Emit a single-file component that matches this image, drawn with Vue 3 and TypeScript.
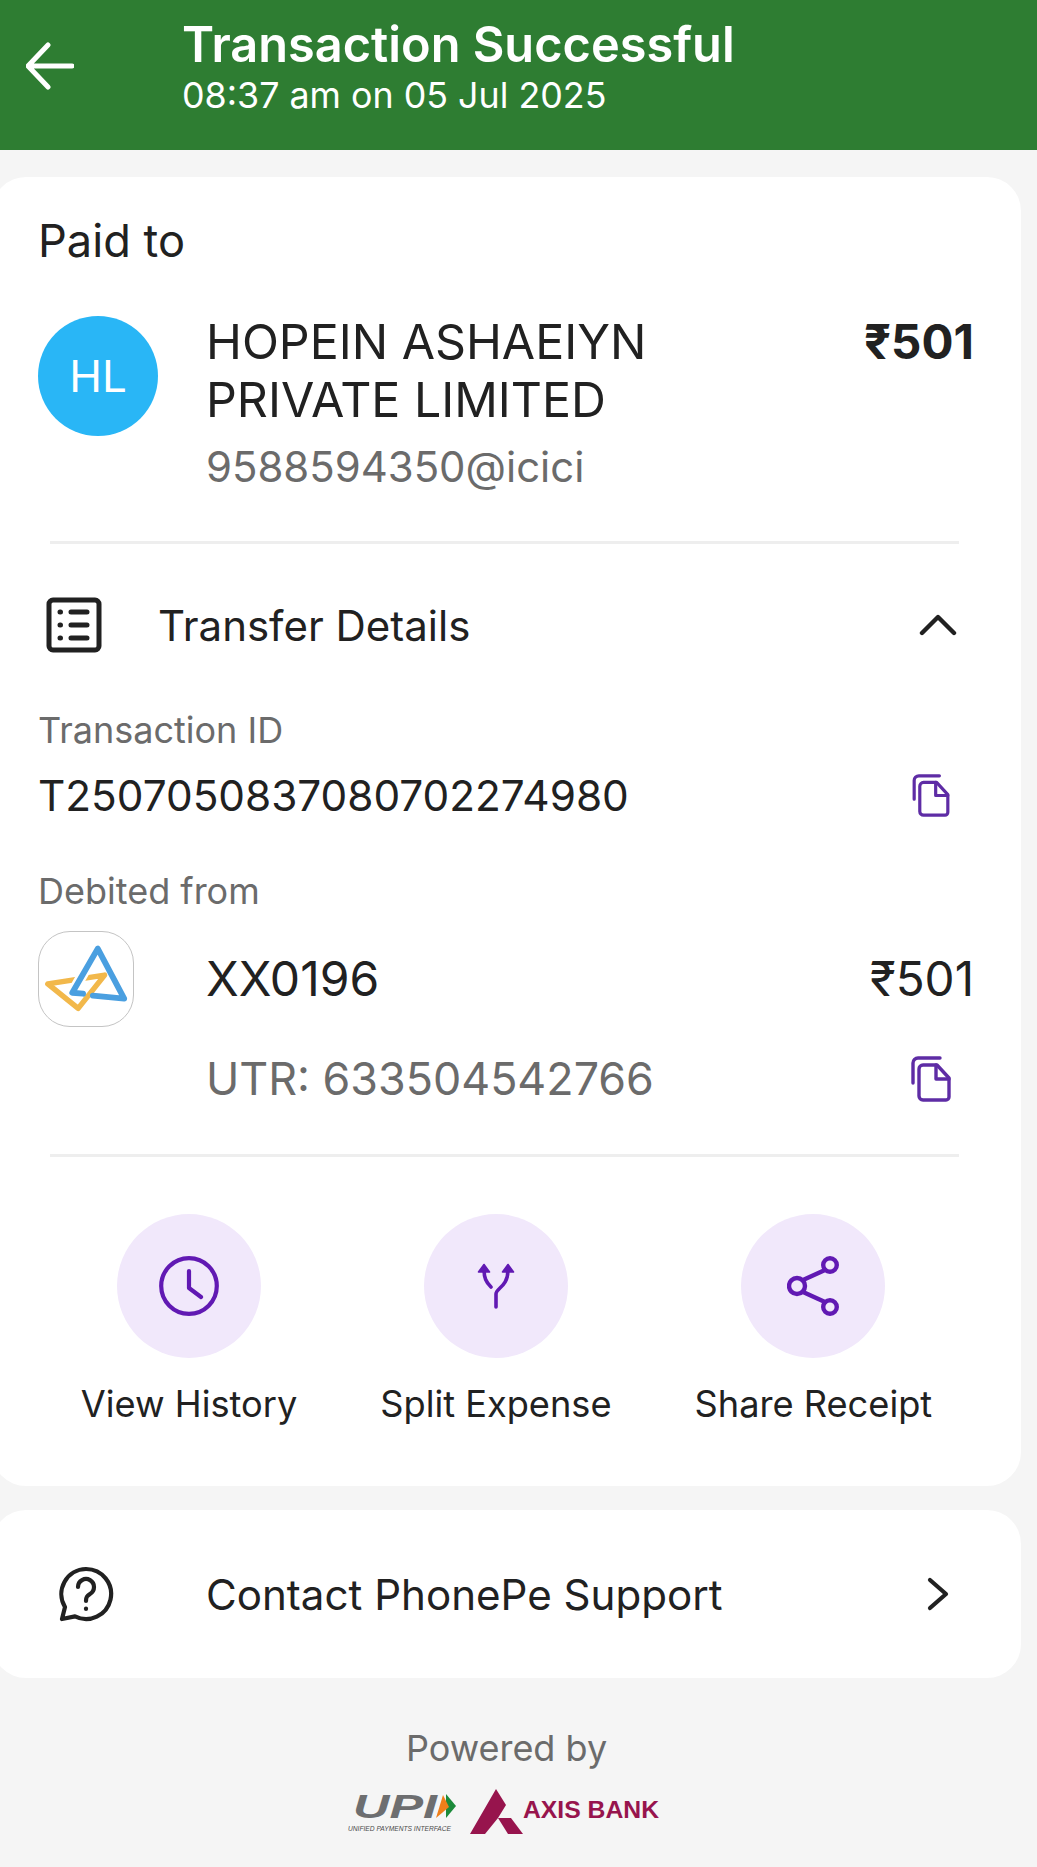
<script setup lang="ts">
const actions = [
  { key: "history", label: "View History" },
  { key: "split", label: "Split Expense" },
  { key: "share", label: "Share Receipt" },
];
</script>

<template>
  <div class="screen">
    <header class="topbar">
      <svg class="back" viewBox="0 0 48 48" fill="none" stroke="#fff" stroke-width="5" stroke-linecap="round" stroke-linejoin="round">
        <path d="M46 24H3M22 3 2 24l20 21" />
      </svg>
      <div class="topbar-text">
        <div class="title">Transaction Successful</div>
        <div class="subtitle">08:37 am on 05 Jul 2025</div>
      </div>
    </header>

    <main class="content">
      <section class="card details">
        <div class="paid-label">Paid to</div>
        <div class="payee">
          <div class="avatar">HL</div>
          <div class="payee-info">
            <div class="payee-name">HOPEIN ASHAEIYN<br />PRIVATE LIMITED</div>
            <div class="payee-upi">9588594350@icici</div>
          </div>
          <div class="payee-amount">₹501</div>
        </div>

        <hr class="divider" />

        <div class="transfer-head">
          <svg class="list-icon" viewBox="0 0 56 56" fill="none" stroke="#212121" stroke-width="5" stroke-linecap="round">
            <rect x="3" y="3" width="50" height="50" rx="4" stroke-linejoin="round" />
            <path d="M25 15h16M25 28h16M25 41h16" />
            <path d="M14 15h.5M14 28h.5M14 41h.5" />
          </svg>
          <span class="transfer-title">Transfer Details</span>
          <svg class="chevron-up" viewBox="0 0 38 22" fill="none" stroke="#212121" stroke-width="4.4" stroke-linecap="round" stroke-linejoin="round">
            <path d="M3 19 19 3l16 16" />
          </svg>
        </div>

        <div class="field-label txn-label">Transaction ID</div>
        <div class="txn-row">
          <span class="txn-id">T2507050837080702274980</span>
          <svg class="copy copy-txn" viewBox="0 0 40 46" fill="none" stroke="#5e2ca5" stroke-width="3.4" stroke-linecap="round" stroke-linejoin="round">
            <path d="M2 27V7a5 5 0 0 1 5-5h22" />
            <path d="M8 13a4 4 0 0 1 4-4h14l12 13v19a3 3 0 0 1-3 3H12a4 4 0 0 1-4-4z" />
            <path d="M25 9v14h13" />
          </svg>
        </div>

        <div class="field-label debit-label">Debited from</div>
        <div class="debit">
          <div class="bank-logo">
            <svg viewBox="0 0 96 96" fill="none" stroke-linejoin="round" stroke-linecap="round">
              <path d="M9 53 67 44 40 78z" stroke="#f2b84b" stroke-width="5.500" />
              <path d="M34 62 50 34" stroke="#fff" stroke-width="11" />
              <path d="M55 65 87 68 60 17 34 62l11 1" stroke="#4a9fe0" stroke-width="6" />
            </svg>
          </div>
          <div class="debit-info">
            <div class="debit-top">
              <span class="debit-account">XX0196</span>
              <span class="debit-amount">₹501</span>
            </div>
            <div class="debit-bottom">
              <span class="utr">UTR: 633504542766</span>
              <svg class="copy" viewBox="0 0 40 46" fill="none" stroke="#5e2ca5" stroke-width="3.4" stroke-linecap="round" stroke-linejoin="round">
                <path d="M2 27V7a5 5 0 0 1 5-5h22" />
                <path d="M8 13a4 4 0 0 1 4-4h14l12 13v19a3 3 0 0 1-3 3H12a4 4 0 0 1-4-4z" />
                <path d="M25 9v14h13" />
              </svg>
            </div>
          </div>
        </div>

        <hr class="divider second" />

        <div class="actions">
          <div v-for="a in actions" :key="a.key" class="action">
            <div class="action-circle">
              <svg v-if="a.key === 'history'" viewBox="0 0 60 60" width="60" height="60" fill="none" stroke="#6119b3" stroke-width="4.2" stroke-linecap="round" stroke-linejoin="round">
                <circle cx="30" cy="30" r="27.8" />
                <path d="M30 15v17l12 9" />
              </svg>
              <svg v-else-if="a.key === 'split'" viewBox="0 0 38 46" width="38" height="46" fill="none" stroke="#6119b3" stroke-width="3.6" stroke-linecap="round" stroke-linejoin="round">
                <path d="M19 44V31c0-6 12-7 12-24V6" />
                <path d="M14 24C9 19 7 15 7 6" />
                <path d="M1.500 9 7 1.500 12.500 9zM25.500 9 31 1.500 36.500 9z" fill="#6119b3" stroke-width="1.600" />
              </svg>
              <svg v-else viewBox="0 0 52 60" width="52" height="60" fill="none" stroke="#6119b3" stroke-width="4.4" stroke-linecap="round">
                <circle cx="43" cy="9" r="6.800" />
                <circle cx="10" cy="30" r="8" />
                <circle cx="43" cy="51" r="6.800" />
                <path d="M16 24 38 14M16 36l22 10" />
              </svg>
            </div>
            <span class="action-label">{{ a.label }}</span>
          </div>
        </div>
      </section>

      <section class="card support">
        <svg class="help" viewBox="0 0 56 56" fill="none" stroke="#212121" stroke-width="4.2" stroke-linecap="round" stroke-linejoin="round">
          <path d="M28 3a25 25 0 1 1-11 47.400L4 53l3-12A25 25 0 0 1 28 3z" />
          <path d="M20 21a8 8 0 1 1 12 7c-3 2-4 3-4 7" />
          <path d="M28 42.500v.5" />
        </svg>
        <span class="support-text">Contact PhonePe Support</span>
        <svg class="chevron-right" viewBox="0 0 22 34" fill="none" stroke="#212121" stroke-width="4.2" stroke-linecap="round" stroke-linejoin="round">
          <path d="M3 3 19 17 3 31" />
        </svg>
      </section>

      <footer class="powered">
        <div class="powered-label">Powered by</div>
        <div class="powered-logos">
          <svg class="upi-logo" viewBox="0 -6 112 54">
            <text x="5" y="29" class="upi-mark" textLength="84" lengthAdjust="spacingAndGlyphs">UPI</text>
            <path d="M98 5 108 17 98 29z" fill="#1b8a3a" />
            <path d="M95 6 101 18 88 29z" fill="#ef7f1a" />
            <text x="0" y="42" class="upi-sub" textLength="103" lengthAdjust="spacingAndGlyphs">UNIFIED PAYMENTS INTERFACE</text>
          </svg>
          <svg class="axis-logo" viewBox="0 -6 192 54">
            <path d="M26 0 36 16 28 29H41L53 45H38L28 29 15 45H0z" fill="#97144d" />
            <text x="53" y="29" class="axis-text" textLength="136" lengthAdjust="spacingAndGlyphs">AXIS BANK</text>
          </svg>
        </div>
      </footer>
    </main>
  </div>
</template>

<style scoped>
.screen {
  width: 1037px;
  height: 1867px;
  overflow: hidden;
  background: #f5f5f5;
  font-family: Inter, "Noto Sans", sans-serif;
  color: #212121;
}

.topbar {
  height: 150px;
  box-sizing: border-box;
  background: #2e7d32;
  color: #fff;
  display: flex;
  align-items: flex-start;
  padding: 17px 0 0 26px;
}

.back {
  width: 48px;
  height: 48px;
  margin-top: 25px;
  flex: none;
}

.topbar-text {
  margin-left: 108px;
}

.title {
  font-size: 48.700px;
  font-weight: 600;
  line-height: 56px;
}

.subtitle {
  font-size: 35.800px;
  line-height: 44px;
}

.content {
  width: 1029px;
  margin-left: -8px;
  padding-top: 27px;
}

.card {
  background: #fff;
  border-radius: 34px;
}

.details {
  height: 1309px;
  box-sizing: border-box;
  padding: 39px 47px 0 46px;
}

.paid-label {
  font-size: 45.200px;
  line-height: 50px;
}

.payee {
  display: flex;
  align-items: flex-start;
  margin-top: 50px;
}

.avatar {
  width: 120px;
  height: 120px;
  flex: none;
  border-radius: 50%;
  background: #29b6f6;
  color: #fff;
  font-size: 44px;
  display: flex;
  align-items: center;
  justify-content: center;
}

.payee-info {
  margin-left: 48px;
  flex: 1;
}

.payee-name {
  font-size: 48.300px;
  line-height: 58px;
  margin-top: -3px;
}

.payee-upi {
  font-size: 41.900px;
  line-height: 52px;
  color: #6b6b6b;
  margin-top: 12px;
}

.payee-amount {
  font-size: 47.500px;
  font-weight: 700;
  line-height: 58px;
  margin-top: -3px;
}

.divider {
  margin: 48px 15px 0 12px;
  border: 0;
  height: 3px;
  background: #eeeeee;
}

.divider.second {
  margin-top: 50px;
}

.transfer-head {
  display: flex;
  align-items: center;
  margin-top: 53px;
  height: 56px;
}

.list-icon {
  width: 56px;
  height: 56px;
  margin-left: 8px;
  flex: none;
}

.transfer-title {
  font-size: 42px;
  margin-left: 56px;
  flex: 1;
}

.chevron-up {
  width: 38px;
  height: 22px;
  margin-right: 17px;
  flex: none;
}

.field-label {
  font-size: 36px;
  line-height: 42px;
  color: #6b6b6b;
}

.txn-label {
  margin-top: 56px;
}

.txn-row {
  display: flex;
  align-items: center;
  justify-content: space-between;
  margin-top: 19px;
  height: 50px;
}

.txn-id {
  font-size: 42.300px;
}

.copy {
  width: 40px;
  height: 46px;
  margin-right: 23px;
  flex: none;
}

.copy-txn {
  width: 38px;
  height: 43px;
  margin-right: 24px;
}

.debit-label {
  margin-top: 50px;
}

.debit {
  display: flex;
  align-items: flex-start;
  margin-top: 19px;
}

.bank-logo {
  width: 96px;
  height: 96px;
  flex: none;
  box-sizing: border-box;
  border: 1px solid #c4c4c4;
  border-radius: 32px;
  background: #fff;
}

.bank-logo svg {
  display: block;
  width: 100%;
  height: 100%;
}

.debit-info {
  margin-left: 72px;
  flex: 1;
}

.debit-top {
  display: flex;
  justify-content: space-between;
  font-size: 48px;
  line-height: 58px;
  margin-top: 19px;
}

.debit-amount {
  font-size: 47.600px;
}

.debit-bottom {
  display: flex;
  align-items: center;
  justify-content: space-between;
  margin-top: 46px;
  height: 50px;
}

.utr {
  font-size: 44.800px;
  color: #6b6b6b;
}

.actions {
  display: flex;
  justify-content: center;
  gap: 83px;
  margin: 57px -47px 0 -46px;
}

.action {
  display: flex;
  flex-direction: column;
  align-items: center;
}

.action-circle {
  width: 144px;
  height: 144px;
  border-radius: 50%;
  background: #f1e8fb;
  display: flex;
  align-items: center;
  justify-content: center;
}

.action-label {
  font-size: 36.200px;
  line-height: 44px;
  margin-top: 24px;
}

.support {
  height: 168px;
  margin-top: 24px;
  display: flex;
  align-items: center;
  padding-left: 66px;
}

.help {
  width: 56px;
  height: 56px;
  flex: none;
}

.support-text {
  font-size: 42.100px;
  margin-left: 92px;
  flex: 1;
}

.chevron-right {
  width: 22px;
  height: 34px;
  margin-right: 72px;
  flex: none;
}

.powered {
  display: flex;
  flex-direction: column;
  align-items: center;
  margin-top: 49px;
}

.powered-label {
  font-size: 36px;
  line-height: 42px;
  color: #6b6b6b;
}

.powered-logos {
  display: flex;
  align-items: flex-start;
  gap: 10px;
  margin: 14px 3px 0 0;
}

.upi-logo {
  width: 112px;
  height: 54px;
}

.axis-logo {
  width: 192px;
  height: 54px;
}

.upi-mark {
  font-family: "Liberation Sans", sans-serif;
  font-size: 34px;
  font-weight: 700;
  font-style: italic;
  fill: #6d6e70;
}

.upi-sub {
  font-family: "Liberation Sans", sans-serif;
  font-size: 7px;
  font-style: italic;
  fill: #4a4a4a;
}

.axis-text {
  font-family: "Liberation Sans", sans-serif;
  font-size: 23px;
  font-weight: 700;
  fill: #97144d;
}
</style>
